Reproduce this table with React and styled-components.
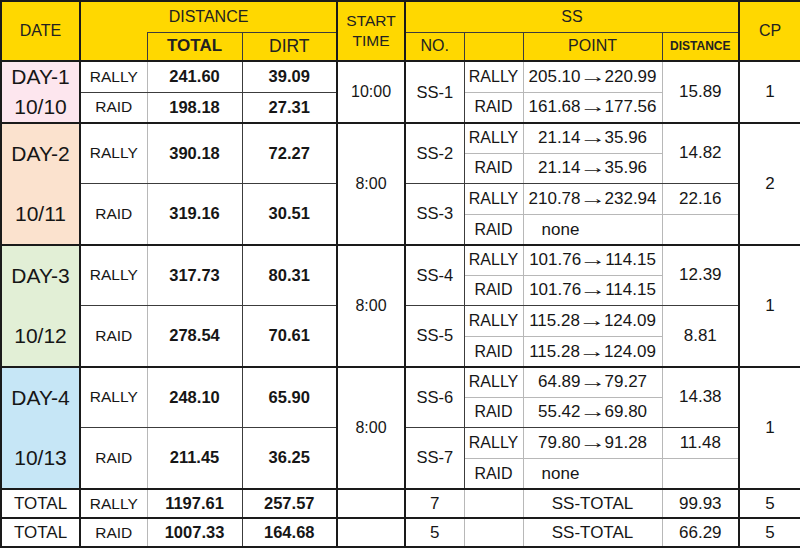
import styled, { createGlobalStyle, css } from "styled-components";

const DARK = "#1a1a1a";
const THIN = "#3c3c3c";
const GRAY = "#b8b8b8";
const YELLOW = "#ffd800";

const GlobalStyle = createGlobalStyle`
  html, body {
    margin: 0;
    background: #fff;
  }
  body {
    font-family: "Liberation Sans", Arial, sans-serif;
    color: #161616;
  }
`;

const Table = styled.table`
  width: 800px;
  border-collapse: collapse;
  table-layout: fixed;
  border: 2px solid ${DARK};
`;

const Col = styled.col`
  width: ${(p) => p.$w}px;
  ${(p) => p.$thick && css`border-right: 2px solid ${DARK};`}
`;

const Head = styled.thead`
  background: ${YELLOW};
  border-bottom: 2px solid ${DARK};
`;

const Group = styled.tbody`
  border-top: 2px solid ${DARK};
`;

const Row = styled.tr`
  height: ${(p) => p.$h ?? 30.2}px;
`;

const grayEdges = (p) => css`
  ${p.$gl && `border-left-color: ${GRAY};`}
  ${p.$gr && `border-right-color: ${GRAY};`}
  ${p.$gt && `border-top-color: ${GRAY};`}
  ${p.$gb && `border-bottom-color: ${GRAY};`}
`;

const HeadCell = styled.th`
  border: 1px solid ${THIN};
  padding: 0;
  color: #222;
  font-size: ${(p) => p.$size || 16}px;
  font-weight: ${(p) => (p.$bold ? 700 : 400)};
  line-height: 20px;
  text-align: center;
  vertical-align: middle;
  white-space: nowrap;
  ${(p) => p.$open && css`border-top-style: hidden;`}
`;

const Cell = styled.td`
  border: 1px solid ${THIN};
  padding: 0 0 0 ${(p) => p.$indent || 0}px;
  background: #fff;
  font-size: ${(p) => p.$size || 17}px;
  font-weight: ${(p) => (p.$bold ? 700 : 400)};
  text-align: ${(p) => p.$align || "center"};
  vertical-align: middle;
  white-space: nowrap;
  ${grayEdges}
`;

/* stretched arrow; margins keep its stretched box clear of the numbers */
const Arrow = styled.span`
  display: inline-flex;
  justify-content: center;
  width: 14px;
  margin: 0 5px;
  transform: scaleX(1.6);
`;

const DateCell = styled.td`
  border: 1px solid ${THIN};
  padding: 0;
  background: ${(p) => p.$bg};
  font-size: 21px;
  vertical-align: middle;
`;

const DateLine = styled.div`
  height: ${(p) => p.$h}px;
  display: flex;
  align-items: center;
  justify-content: center;
`;

const days = [
  {
    day: "DAY-1",
    date: "10/10",
    bg: "#fde6ee",
    start: "10:00",
    cp: "1",
    rally: ["241.60", "39.09"],
    raid: ["198.18", "27.31"],
    ss: [{ no: "SS-1", rally: ["205.10", "220.99"], raid: ["161.68", "177.56"], dist: ["15.89"] }],
  },
  {
    day: "DAY-2",
    date: "10/11",
    bg: "#fbe2ce",
    start: "8:00",
    cp: "2",
    rally: ["390.18", "72.27"],
    raid: ["319.16", "30.51"],
    ss: [
      { no: "SS-2", rally: ["21.14", "35.96"], raid: ["21.14", "35.96"], dist: ["14.82"] },
      { no: "SS-3", rally: ["210.78", "232.94"], raid: null, dist: ["22.16", ""] },
    ],
  },
  {
    day: "DAY-3",
    date: "10/12",
    bg: "#e2efd6",
    start: "8:00",
    cp: "1",
    rally: ["317.73", "80.31"],
    raid: ["278.54", "70.61"],
    ss: [
      { no: "SS-4", rally: ["101.76", "114.15"], raid: ["101.76", "114.15"], dist: ["12.39"] },
      { no: "SS-5", rally: ["115.28", "124.09"], raid: ["115.28", "124.09"], dist: ["8.81"] },
    ],
  },
  {
    day: "DAY-4",
    date: "10/13",
    bg: "#c6e6f6",
    start: "8:00",
    cp: "1",
    rally: ["248.10", "65.90"],
    raid: ["211.45", "36.25"],
    ss: [
      { no: "SS-6", rally: ["64.89", "79.27"], raid: ["55.42", "69.80"], dist: ["14.38"] },
      { no: "SS-7", rally: ["79.80", "91.28"], raid: null, dist: ["11.48", ""] },
    ],
  },
];

const totals = [
  { kind: "RALLY", total: "1197.61", dirt: "257.57", count: "7", dist: "99.93", cp: "5" },
  { kind: "RAID", total: "1007.33", dirt: "164.68", count: "5", dist: "66.29", cp: "5" },
];

function DayRows({ d }) {
  const n = d.ss.length;
  const rows = [];

  d.ss.forEach((s, i) => {
    ["rally", "raid"].forEach((kind, j) => {
      const r = i * 2 + j;
      const top = j === 0;
      const split = { $gb: top, $gt: !top };
      const leftKind = r === 0 ? "rally" : r === n ? "raid" : null;
      const point = s[kind];

      rows.push(
        <Row key={r}>
          {r === 0 && (
            <DateCell rowSpan={n * 2} $bg={d.bg}>
              <DateLine $h={n * 30}>{d.day}</DateLine>
              <DateLine $h={n * 30}>{d.date}</DateLine>
            </DateCell>
          )}
          {leftKind && (
            <>
              <Cell rowSpan={n} $size={15.5} $gr>
                {leftKind.toUpperCase()}
              </Cell>
              <Cell rowSpan={n} $size={16.5} $bold $gl>
                {d[leftKind][0]}
              </Cell>
              <Cell rowSpan={n} $size={16.5} $bold>
                {d[leftKind][1]}
              </Cell>
            </>
          )}
          {r === 0 && (
            <Cell rowSpan={n * 2} $size={16}>
              {d.start}
            </Cell>
          )}
          {top && (
            <Cell rowSpan={2} $size={16.5}>
              {s.no}
            </Cell>
          )}
          <Cell $size={16} $gr {...split}>
            {kind.toUpperCase()}
          </Cell>
          {point ? (
            <Cell $gl $gr {...split}>
              {point[0]}
              <Arrow>→</Arrow>
              {point[1]}
            </Cell>
          ) : (
            <Cell $gl $gr {...split} $align="left" $indent={18}>
              none
            </Cell>
          )}
          {s.dist.length === 1
            ? top && (
                <Cell rowSpan={2} $gl>
                  {s.dist[0]}
                </Cell>
              )
            : (
                <Cell $gl {...split}>
                  {s.dist[j]}
                </Cell>
              )}
          {r === 0 && <Cell rowSpan={n * 2}>{d.cp}</Cell>}
        </Row>
      );
    });
  });

  return <Group>{rows}</Group>;
}

export default function App() {
  return (
    <>
      <GlobalStyle />
      <Table>
        <colgroup>
          <Col $w={79} $thick />
          <Col $w={67} />
          <Col $w={95} />
          <Col $w={95} $thick />
          <Col $w={68} $thick />
          <Col $w={59} />
          <Col $w={59} />
          <Col $w={139} />
          <Col $w={77} $thick />
          <Col $w={62} />
        </colgroup>
        <Head>
          <Row $h={31}>
            <HeadCell rowSpan={2}>DATE</HeadCell>
            <HeadCell colSpan={3}>DISTANCE</HeadCell>
            <HeadCell rowSpan={2} $size={15.5}>
              START
              <br />
              TIME
            </HeadCell>
            <HeadCell colSpan={4}>SS</HeadCell>
            <HeadCell rowSpan={2}>CP</HeadCell>
          </Row>
          <Row $h={29}>
            <HeadCell $open />
            <HeadCell $size={17} $bold>
              TOTAL
            </HeadCell>
            <HeadCell $size={17.5}>DIRT</HeadCell>
            <HeadCell>NO.</HeadCell>
            <HeadCell />
            <HeadCell>POINT</HeadCell>
            <HeadCell $size={12} $bold>
              DISTANCE
            </HeadCell>
          </Row>
        </Head>
        {days.map((d) => (
          <DayRows key={d.day} d={d} />
        ))}
        {totals.map((t) => (
          <Group key={t.kind}>
            <Row $h={29}>
              <Cell>TOTAL</Cell>
              <Cell $size={15.5} $gr>
                {t.kind}
              </Cell>
              <Cell $size={16.5} $bold $gl>
                {t.total}
              </Cell>
              <Cell $size={16.5} $bold>
                {t.dirt}
              </Cell>
              <Cell />
              <Cell $gr>{t.count}</Cell>
              <Cell $gl $gr />
              <Cell $gl $gr>
                SS-TOTAL
              </Cell>
              <Cell $gl>{t.dist}</Cell>
              <Cell>{t.cp}</Cell>
            </Row>
          </Group>
        ))}
      </Table>
    </>
  );
}
